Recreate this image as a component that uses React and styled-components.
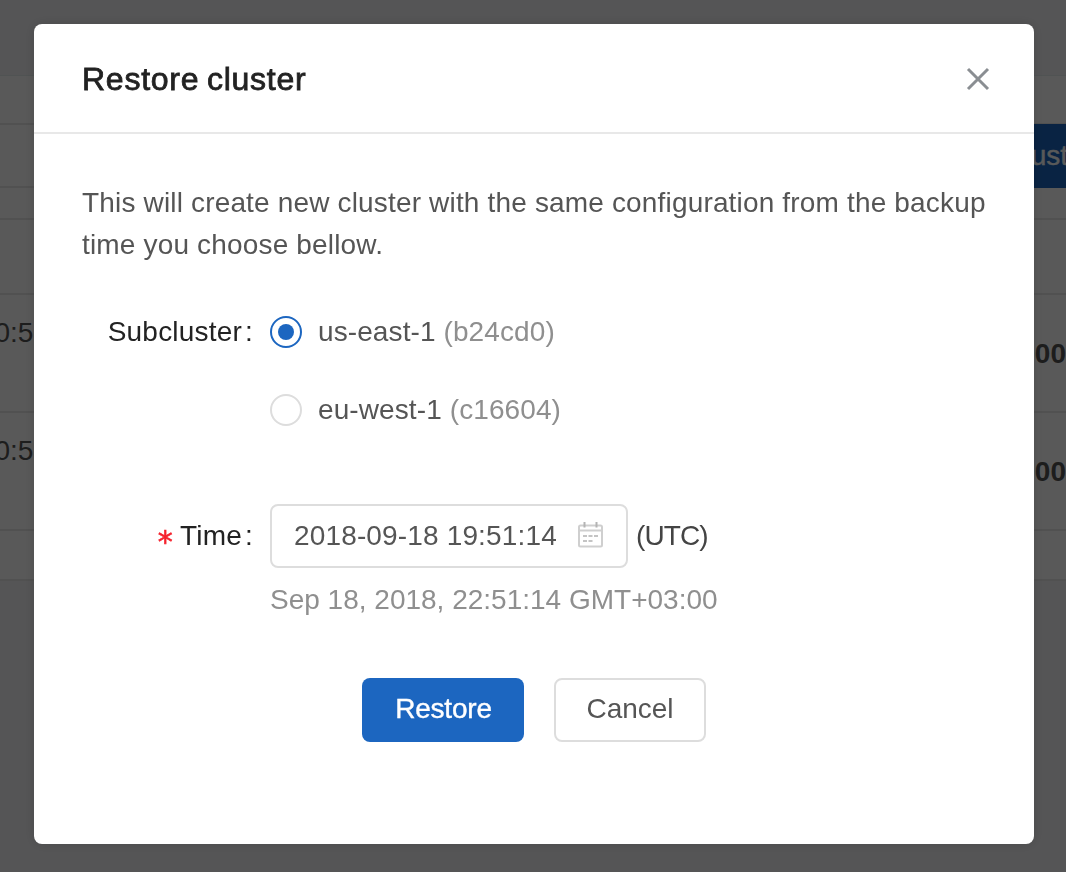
import styled, { createGlobalStyle } from 'styled-components';

const GlobalStyle = createGlobalStyle`
  html, body {
    margin: 0;
    padding: 0;
    height: 100%;
    overflow: hidden;
  }
  * {
    box-sizing: border-box;
  }
  body {
    font-family: "Liberation Sans", Arial, sans-serif;
    font-size: 28px;
    color: #555555;
  }
`;

const rows = [
  { height: 49 },
  { height: 63, action: true },
  { height: 32 },
  { height: 75 },
  { height: 118, time: '19:50:50', amount: '1000' },
  { height: 118, time: '19:50:51', amount: '1000' },
  { height: 50 },
];

const CalendarIcon = () => (
  <CalendarSvg width="26" height="26" viewBox="0 0 26 26" fill="none" stroke="#cfcfcf" strokeWidth="2">
    <rect x="1" y="3.5" width="23" height="21" rx="1.5" />
    <path d="M1 8.5h23" />
    <path d="M6.5 0v5.5M18.5 0v5.5" stroke="#b4b4b4" />
    <path d="M5 14h4M10.5 14h4M16 14h4M5 19h4M10.5 19h4" stroke="#c4c4c4" />
  </CalendarSvg>
);

const CloseIcon = () => (
  <svg width="24" height="24" viewBox="0 0 24 24" fill="none" stroke="#8a8e92" strokeWidth="3">
    <path d="M2 2l20 20M22 2L2 22" />
  </svg>
);

const App = () => {
  return (
    <>
      <GlobalStyle />
      <Page>
        <Table>
          {rows.map((row, index) => (
            <Row key={index} $height={row.height}>
              {row.time && <TimeCell>{row.time}</TimeCell>}
              {row.amount && <AmountCell>{row.amount}</AmountCell>}
              {row.action && <ActionButton>Restore cluster</ActionButton>}
            </Row>
          ))}
        </Table>
      </Page>

      <Overlay>
        <Modal>
          <Header>
            <Title>Restore cluster</Title>
            <CloseButton>
              <CloseIcon />
            </CloseButton>
          </Header>

          <Body>
            <Description>
              This will create new cluster with the same configuration from the backup time you
              choose bellow.
            </Description>

            <Form>
              <Label>
                Subcluster<Colon>:</Colon>
              </Label>
              <RadioGroup>
                <RadioRow>
                  <Radio $checked />
                  <RadioText>
                    us-east-1 <Muted>(b24cd0)</Muted>
                  </RadioText>
                </RadioRow>
                <RadioRow>
                  <Radio />
                  <RadioText>
                    eu-west-1 <Muted>(c16604)</Muted>
                  </RadioText>
                </RadioRow>
              </RadioGroup>

              <TimeLabel>
                <Required>*</Required>Time<Colon>:</Colon>
              </TimeLabel>
              <TimeField>
                <TimeRow>
                  <DateInput>
                    2018-09-18 19:51:14
                    <CalendarIcon />
                  </DateInput>
                  <Zone>(UTC)</Zone>
                </TimeRow>
                <Hint>Sep 18, 2018, 22:51:14 GMT+03:00</Hint>
              </TimeField>
            </Form>

            <Actions>
              <PrimaryButton>Restore</PrimaryButton>
              <DefaultButton>Cancel</DefaultButton>
            </Actions>
          </Body>
        </Modal>
      </Overlay>
    </>
  );
};

export default App;

const Page = styled.div`
  height: 872px;
  padding-top: 75px;
  background-color: #f3f3f5;
  overflow: hidden;
`;

const Table = styled.div`
  background-color: #ffffff;
  border-top: 1px solid #e4eeee;
`;

const Row = styled.div`
  height: ${(props) => props.$height}px;
  display: flex;
  align-items: center;
  justify-content: space-between;
  border-bottom: 2px solid #e8e8e8;
`;

const TimeCell = styled.div`
  margin-left: -60px;
  margin-bottom: 40px;
  color: #555555;
`;

const AmountCell = styled.div`
  margin-top: 2px;
  font-weight: 700;
  color: #555555;
`;

const ActionButton = styled.div`
  height: 64px;
  flex: none;
  margin-left: auto;
  margin-right: -27px;
  padding: 0 0 0 40px;
  display: flex;
  align-items: center;
  background-color: #1c66c0;
  color: #ffffff;
  -webkit-text-stroke: 0.4px #ffffff;
`;

const Overlay = styled.div`
  position: fixed;
  inset: 0;
  padding: 24px 32px 0 34px;
  background-color: rgba(0, 0, 0, 0.65);
`;

const Modal = styled.div`
  width: 1000px;
  background-color: #ffffff;
  border-radius: 8px;
  box-shadow: 0 0 12px rgba(0, 0, 0, 0.15);
`;

const Header = styled.div`
  height: 110px;
  padding: 0 44px 0 48px;
  display: flex;
  align-items: center;
  justify-content: space-between;
  border-bottom: 2px solid #e8e8e8;
`;

const Title = styled.div`
  margin-top: 2px;
  font-size: 32px;
  letter-spacing: 0.75px;
  word-spacing: -2px;
  color: #222222;
  -webkit-text-stroke: 0.8px #222222;
`;

const CloseButton = styled.div`
  display: flex;
  margin-top: 2px;
`;

const Body = styled.div`
  padding: 48px 48px 102px;
`;

const Description = styled.div`
  line-height: 42px;
  letter-spacing: 0.165px;
  color: #555555;
`;

const Form = styled.div`
  margin-top: 27px;
  display: grid;
  grid-template-columns: 188px 1fr;
  row-gap: 55px;
`;

const Label = styled.div`
  height: 78px;
  display: flex;
  align-items: center;
  justify-content: flex-end;
  letter-spacing: 0.2px;
  color: #222222;
`;

const TimeLabel = styled(Label)`
  height: 64px;
`;

const Colon = styled.span`
  margin: 0 17px 0 3px;
`;

const Required = styled.span`
  margin: 11px 7px 0 0;
  font-size: 30px;
  font-family: "DejaVu Sans", sans-serif;
  color: #f5222d;
  -webkit-text-stroke: 0.6px #f5222d;
`;

const RadioGroup = styled.div`
  display: flex;
  flex-direction: column;
`;

const RadioRow = styled.div`
  height: 78px;
  display: flex;
  align-items: center;
  gap: 16px;
`;

const RadioText = styled.span`
  letter-spacing: 0.1px;
`;

const Radio = styled.span`
  width: 32px;
  height: 32px;
  flex: none;
  display: flex;
  align-items: center;
  justify-content: center;
  border: 2px solid ${(props) => (props.$checked ? '#1c66c0' : '#dddddd')};
  border-radius: 50%;

  &::after {
    content: '';
    display: ${(props) => (props.$checked ? 'block' : 'none')};
    width: 16px;
    height: 16px;
    border-radius: 50%;
    background-color: #1c66c0;
  }
`;

const Muted = styled.span`
  color: #8f8f8f;
`;

const TimeField = styled.div`
  display: flex;
  flex-direction: column;
`;

const TimeRow = styled.div`
  display: flex;
  align-items: center;
  gap: 8px;
`;

const DateInput = styled.div`
  width: 358px;
  height: 64px;
  padding: 0 22px;
  display: flex;
  align-items: center;
  justify-content: space-between;
  border: 2px solid #dddddd;
  border-radius: 8px;
  letter-spacing: 0.15px;
  color: #555555;
`;

const CalendarSvg = styled.svg`
  margin-bottom: 2px;
`;

const Zone = styled.span`
  letter-spacing: -0.9px;
  color: #444444;
`;

const Hint = styled.div`
  margin-top: 11px;
  line-height: 42px;
  color: #8f8f8f;
`;

const Actions = styled.div`
  margin-top: 57px;
  display: flex;
  justify-content: center;
  gap: 30px;
`;

const PrimaryButton = styled.div`
  width: 162px;
  height: 64px;
  padding: 0 0 2px 1px;
  display: flex;
  align-items: center;
  justify-content: center;
  border-radius: 8px;
  background-color: #1c66c0;
  color: #ffffff;
  letter-spacing: -0.2px;
  -webkit-text-stroke: 0.4px #ffffff;
`;

const DefaultButton = styled.div`
  width: 152px;
  height: 64px;
  padding-bottom: 2px;
  display: flex;
  align-items: center;
  justify-content: center;
  border: 2px solid #dddddd;
  border-radius: 8px;
  color: #555555;
`;
